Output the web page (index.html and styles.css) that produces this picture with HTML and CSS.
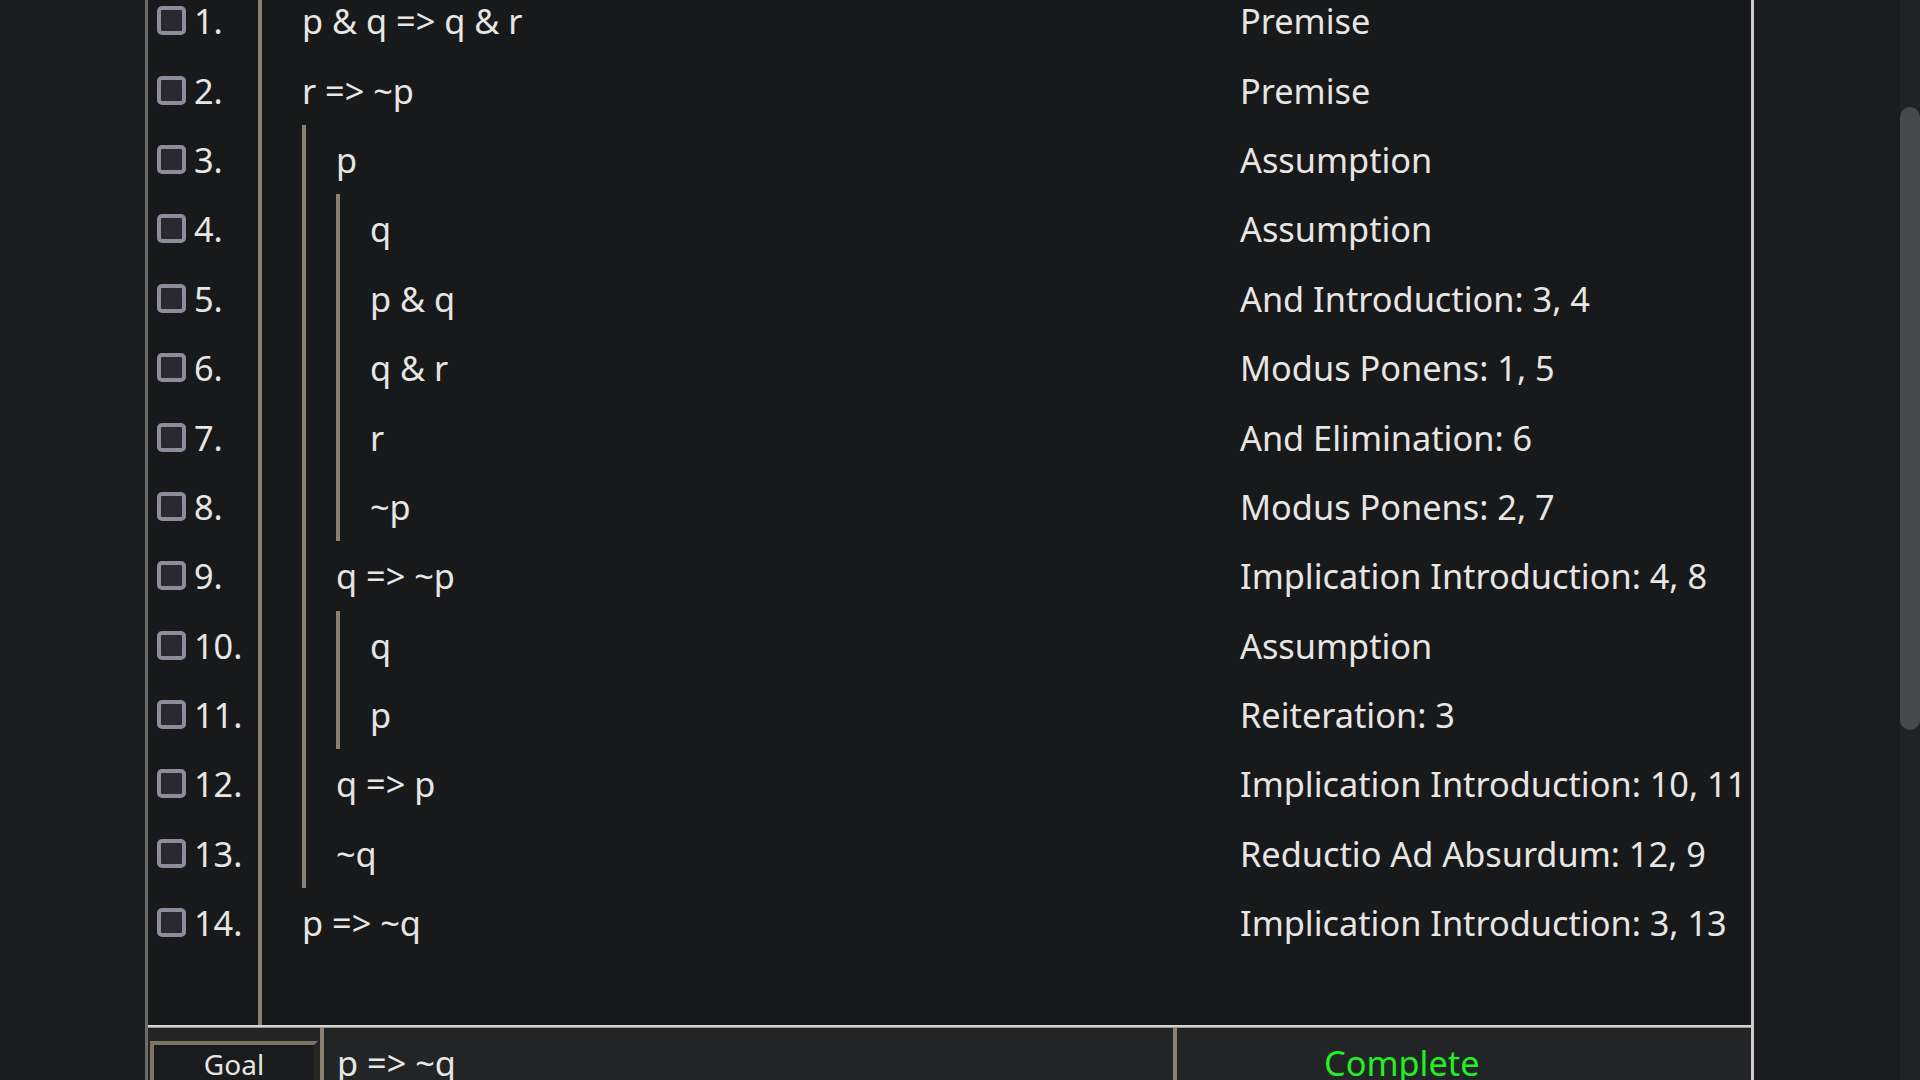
FILE: index.html
```html
<!DOCTYPE html>
<html>
<head>
<meta charset="utf-8">
<link rel="stylesheet" href="styles.css">
</head>
<body>
<div class="page">
  <div class="main">
    <div class="frame">
      <div class="proof">
        <div class="gutter">
          <div class="num-row"><span class="box"></span><span class="num">1.</span></div>
          <div class="num-row"><span class="box"></span><span class="num">2.</span></div>
          <div class="num-row"><span class="box"></span><span class="num">3.</span></div>
          <div class="num-row"><span class="box"></span><span class="num">4.</span></div>
          <div class="num-row"><span class="box"></span><span class="num">5.</span></div>
          <div class="num-row"><span class="box"></span><span class="num">6.</span></div>
          <div class="num-row"><span class="box"></span><span class="num">7.</span></div>
          <div class="num-row"><span class="box"></span><span class="num">8.</span></div>
          <div class="num-row"><span class="box"></span><span class="num">9.</span></div>
          <div class="num-row"><span class="box"></span><span class="num">10.</span></div>
          <div class="num-row"><span class="box"></span><span class="num">11.</span></div>
          <div class="num-row"><span class="box"></span><span class="num">12.</span></div>
          <div class="num-row"><span class="box"></span><span class="num">13.</span></div>
          <div class="num-row"><span class="box"></span><span class="num">14.</span></div>
        </div>
        <div class="lines">
          <div class="line"><div class="formula"><span class="text">p &amp; q =&gt; q &amp; r</span></div><div class="just">Premise</div></div>
          <div class="line"><div class="formula"><span class="text">r =&gt; ~p</span></div><div class="just">Premise</div></div>
          <div class="line"><div class="formula"><span class="bar"></span><span class="text">p</span></div><div class="just">Assumption</div></div>
          <div class="line"><div class="formula"><span class="bar"></span><span class="bar"></span><span class="text">q</span></div><div class="just">Assumption</div></div>
          <div class="line"><div class="formula"><span class="bar"></span><span class="bar"></span><span class="text">p &amp; q</span></div><div class="just">And Introduction: 3, 4</div></div>
          <div class="line"><div class="formula"><span class="bar"></span><span class="bar"></span><span class="text">q &amp; r</span></div><div class="just">Modus Ponens: 1, 5</div></div>
          <div class="line"><div class="formula"><span class="bar"></span><span class="bar"></span><span class="text">r</span></div><div class="just">And Elimination: 6</div></div>
          <div class="line"><div class="formula"><span class="bar"></span><span class="bar"></span><span class="text">~p</span></div><div class="just">Modus Ponens: 2, 7</div></div>
          <div class="line"><div class="formula"><span class="bar"></span><span class="text">q =&gt; ~p</span></div><div class="just">Implication Introduction: 4, 8</div></div>
          <div class="line"><div class="formula"><span class="bar"></span><span class="bar"></span><span class="text">q</span></div><div class="just">Assumption</div></div>
          <div class="line"><div class="formula"><span class="bar"></span><span class="bar"></span><span class="text">p</span></div><div class="just">Reiteration: 3</div></div>
          <div class="line"><div class="formula"><span class="bar"></span><span class="text">q =&gt; p</span></div><div class="just">Implication Introduction: 10, 11</div></div>
          <div class="line"><div class="formula"><span class="bar"></span><span class="text">~q</span></div><div class="just">Reductio Ad Absurdum: 12, 9</div></div>
          <div class="line"><div class="formula"><span class="text">p =&gt; ~q</span></div><div class="just">Implication Introduction: 3, 13</div></div>
        </div>
      </div>
      <div class="bottom">
        <div class="goal-cell"><div class="goal-btn">Goal</div></div>
        <div class="goal-formula">p =&gt; ~q</div>
        <div class="status">Complete</div>
      </div>
    </div>
  </div>
  <div class="scrollbar"><div class="thumb"></div></div>
</div>
</body>
</html>
```
FILE: styles.css
```css
html, body {
  margin: 0;
  padding: 0;
  height: 1080px;
  overflow: hidden;
  background: #1a1c1d;
  font-family: "Noto Sans", "Open Sans", sans-serif;
  color: #e8e6e3;
}

.page {
  display: flex;
  height: 1080px;
}

.main {
  width: 1900px;
  padding-left: 145px;
  box-sizing: border-box;
  background: #1a1c1d;
}

.frame {
  width: 1609px;
  box-sizing: border-box;
  margin-top: -14px;
  border-left: 3px solid #6b6b6b;
  border-right: 3px solid #cdcdcd;
  background: #18191b;
  display: flex;
  flex-direction: column;
}

.proof {
  display: flex;
  height: 1041px;
  border-bottom: 2px solid #d3d3d3;
  box-sizing: border-box;
}

.gutter {
  width: 114px;
  flex: none;
  border-right: 4px solid #8a8172;
  box-sizing: border-box;
  padding-left: 9px;
}

.num-row {
  height: 69.4px;
  display: flex;
  align-items: center;
  gap: 8px;
}

.box {
  width: 29px;
  height: 29px;
  box-sizing: border-box;
  border: 4px solid #8e8b9a;
  border-radius: 5px;
  background: #2a2831;
  flex: none;
}

.num {
  font-size: 34.3px;
  line-height: 49px;
}

.lines {
  flex: 1;
  display: flex;
  flex-direction: column;
}

.line {
  height: 69.4px;
  display: flex;
}

.formula {
  flex: 1;
  display: flex;
  align-items: center;
  padding-left: 40px;
}

.bar {
  width: 34px;
  align-self: stretch;
  box-sizing: border-box;
  border-left: 4px solid #8a8172;
  flex: none;
}

.text, .just {
  font-size: 34.3px;
  line-height: 49px;
  white-space: nowrap;
}

.just {
  width: 511px;
  flex: none;
  display: flex;
  align-items: center;
}

.bottom {
  display: flex;
  height: 80px;
  background: #222426;
  border-top: 1px solid #9a968e;
}

.goal-cell {
  width: 172px;
  flex: none;
  padding: 13px 2px 0 2px;
  box-sizing: border-box;
}

.goal-btn {
  width: 168px;
  height: 60px;
  box-sizing: border-box;
  border: 4px outset #7d7564;
  background: #1a1b1d;
  font-size: 28px;
  line-height: 36px;
  padding-top: 1px;
  text-align: center;
}

.goal-formula {
  flex: 1;
  border-left: 4px solid #8a8172;
  padding: 10px 0 0 13px;
  font-size: 34.3px;
  line-height: 49px;
  white-space: nowrap;
}

.status {
  width: 578px;
  flex: none;
  box-sizing: border-box;
  border-left: 4px solid #8a8172;
  padding: 10px 0 0 147px;
  font-size: 34.3px;
  line-height: 49px;
  color: #22f022;
}

.scrollbar {
  width: 20px;
  flex: none;
  background: #202324;
  padding-top: 107px;
  box-sizing: border-box;
}

.thumb {
  height: 623px;
  background: #454a4d;
  border-radius: 10px;
}
```
